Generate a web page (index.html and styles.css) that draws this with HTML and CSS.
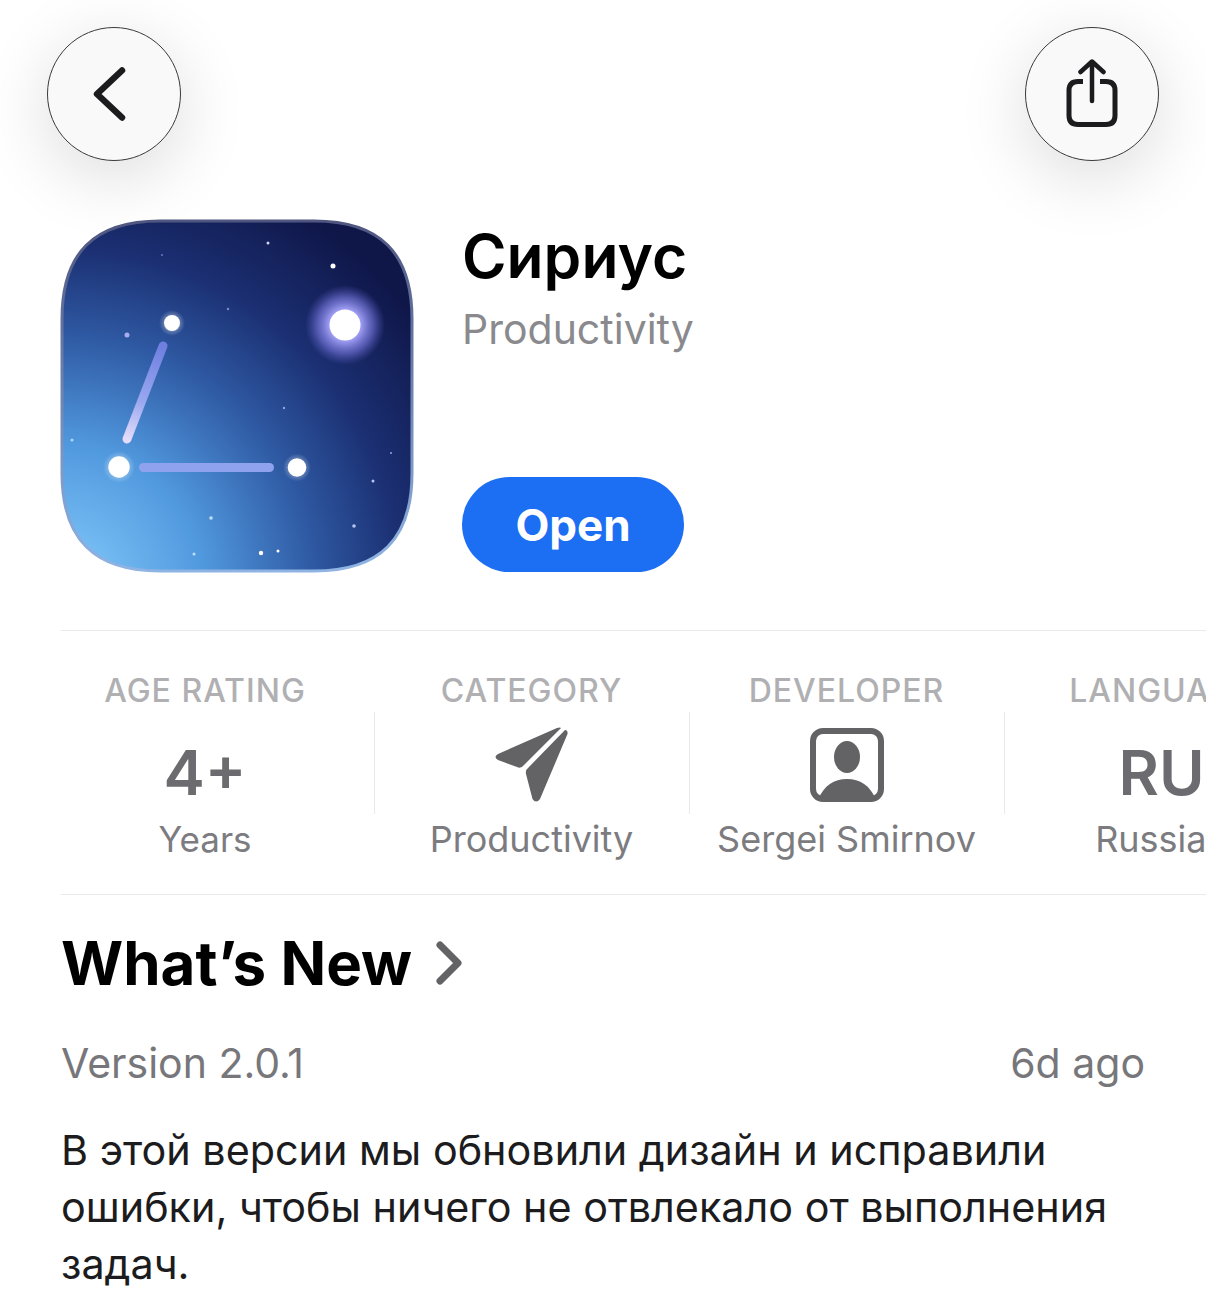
FILE: index.html
```html
<!DOCTYPE html>
<html lang="en">
<head>
<meta charset="UTF-8">
<meta name="viewport" content="width=device-width, initial-scale=1.0">
<title>Сириус</title>
<link rel="stylesheet" href="styles.css">
</head>
<body>

<div class="top-bar">
  <div class="round-btn">
    <svg width="36" height="56" viewBox="0 0 36 56"><path d="M30 4.5 L5 28 L30 51.5" fill="none" stroke="#1c1c1e" stroke-width="6.5" stroke-linecap="round" stroke-linejoin="round"/></svg>
  </div>
  <div class="round-btn">
    <svg width="56" height="70" viewBox="0 0 56 70"><path d="M19 22.5 H14 Q5 22.5 5 31.5 V56.5 Q5 65.5 14 65.5 H42 Q51 65.5 51 56.5 V31.5 Q51 22.5 42 22.5 H36" fill="none" stroke="#1c1c1e" stroke-width="5"/><path d="M28 42 V3 M16.5 13 L28 2.5 L39.5 13" fill="none" stroke="#1c1c1e" stroke-width="4.5" stroke-linecap="round" stroke-linejoin="round"/></svg>
  </div>
</div>

<div class="app-head">
  <svg class="app-icon" width="354" height="354" viewBox="0 0 354 354">
    <defs>
      <radialGradient id="sky" gradientUnits="userSpaceOnUse" cx="0" cy="370" r="450">
        <stop offset="0" stop-color="#86cdfd"/>
        <stop offset="0.32" stop-color="#5199de"/>
        <stop offset="0.56" stop-color="#2f5aa4"/>
        <stop offset="0.76" stop-color="#1b2f72"/>
        <stop offset="1" stop-color="#0f1648"/>
      </radialGradient>
      <radialGradient id="halo">
        <stop offset="0.4" stop-color="#9d9cf2"/>
        <stop offset="0.7" stop-color="#7474d8" stop-opacity="0.65"/>
        <stop offset="1" stop-color="#5a5ac0" stop-opacity="0"/>
      </radialGradient>
      <radialGradient id="glow">
        <stop offset="0.5" stop-color="#ffffff" stop-opacity="0.35"/>
        <stop offset="1" stop-color="#ffffff" stop-opacity="0"/>
      </radialGradient>
      <linearGradient id="arm" gradientUnits="userSpaceOnUse" x1="103" y1="127" x2="67" y2="220">
        <stop offset="0" stop-color="#6f7fe0"/>
        <stop offset="0.6" stop-color="#9aa8f0"/>
        <stop offset="1" stop-color="#e4dcfa"/>
      </linearGradient>
      <linearGradient id="rim" x1="0" y1="0" x2="0" y2="1">
        <stop offset="0" stop-color="#4f5680"/>
        <stop offset="1" stop-color="#8fb4e4"/>
      </linearGradient>
    </defs>
    <path d="M100 2 H254 C320 2 352 34 352 100 V254 C352 320 320 352 254 352 H100 C34 352 2 320 2 254 V100 C2 34 34 2 100 2 Z" fill="url(#sky)" stroke="url(#rim)" stroke-width="3"/>
    <circle cx="285" cy="106" r="40" fill="url(#halo)"/>
    <circle cx="285" cy="106" r="15.5" fill="#fff"/>
    <path d="M103 127 L67 220" stroke="url(#arm)" stroke-width="9" stroke-linecap="round" fill="none"/>
    <rect x="79" y="244" width="135" height="9" rx="4.5" fill="#8ea2ee"/>
    <circle cx="112" cy="104" r="13" fill="url(#glow)"/>
    <circle cx="59" cy="248" r="16" fill="url(#glow)"/>
    <circle cx="237" cy="248.5" r="14" fill="url(#glow)"/>
    <circle cx="112" cy="104" r="8" fill="#fff"/>
    <circle cx="59" cy="248" r="10.7" fill="#fff"/>
    <circle cx="237" cy="248.5" r="9.3" fill="#fff"/>
    <g fill="#fff">
      <circle cx="273" cy="47" r="2.5"/>
      <circle cx="208" cy="24" r="1.5" fill="#cfd4f4"/>
      <circle cx="67" cy="116" r="2.5" fill="#a6aef0"/>
      <circle cx="12" cy="221" r="1.5" fill="#a8dcf8"/>
      <circle cx="151" cy="299" r="1.8" fill="#bfe0fa"/>
      <circle cx="201" cy="334" r="2.2"/>
      <circle cx="218" cy="332" r="1.5"/>
      <circle cx="134" cy="335" r="1.5" fill="#bfe0fa"/>
      <circle cx="294" cy="307" r="1.8" fill="#b6c6f2"/>
      <circle cx="313" cy="262" r="1.5" fill="#b6c6f2"/>
      <circle cx="224" cy="189" r="1.2" fill="#8fa5e6"/>
      <circle cx="168" cy="90" r="1.2" fill="#7a8ad6"/>
      <circle cx="102" cy="36" r="1" fill="#6a78c8"/>
      <circle cx="331" cy="234" r="1" fill="#8fa5e6"/>
    </g>
  </svg>
  <div class="app-info">
    <h1 class="app-name">Сириус</h1>
    <div class="app-cat">Productivity</div>
    <div class="open-btn">Open</div>
  </div>
</div>

<div class="stats">
  <div class="stat stat-age">
    <div class="stat-label">AGE RATING</div>
    <div class="stat-value"><span class="stat-big">4+</span></div>
    <div class="stat-sub">Years</div>
  </div>
  <div class="stat stat-cat">
    <div class="stat-label">CATEGORY</div>
    <div class="stat-value">
      <svg width="76" height="76" viewBox="0 0 76 76"><path d="M71 3 Q74 3 73.5 7 L46 72 Q42 77 38.500 72 L32 47 Q31 43 35 40 Z" fill="#636366"/><path d="M67 1 L30 38 Q27 42 23 40 L4 33 Q-1 30 4 27 L63 1 Q66 0 67 1 Z" fill="#636366"/></svg>
    </div>
    <div class="stat-sub">Productivity</div>
  </div>
  <div class="stat stat-dev">
    <div class="stat-label">DEVELOPER</div>
    <div class="stat-value">
      <svg width="74" height="74" viewBox="0 0 74 74"><rect x="3" y="3" width="68" height="68" rx="10" fill="#fff" stroke="#636366" stroke-width="6"/><ellipse cx="37" cy="29" rx="13" ry="16" fill="#636366"/><path d="M8 72 C14 57 24 51 37 51 C50 51 60 57 66 72 Z" fill="#636366"/></svg>
    </div>
    <div class="stat-sub">Sergei Smirnov</div>
  </div>
  <div class="stat stat-lang">
    <div class="stat-label">LANGUAGE</div>
    <div class="stat-value"><span class="stat-big">RU</span></div>
    <div class="stat-sub">Russian</div>
  </div>
</div>

<div class="whats-new">
  <div class="wn-title">
    <h2>What’s New</h2>
    <svg width="28" height="44" viewBox="0 0 28 44"><path d="M6 4 L24 22 L6 40" fill="none" stroke="#636366" stroke-width="7" stroke-linecap="round" stroke-linejoin="round"/></svg>
  </div>
  <div class="wn-meta">
    <span>Version 2.0.1</span>
    <span>6d ago</span>
  </div>
  <p class="wn-text">В этой версии мы обновили дизайн и исправили ошибки, чтобы ничего не отвлекало от выполнения задач.</p>
</div>

</body>
</html>
```
FILE: styles.css
```css
html, body {
  margin: 0;
  height: 1309px;
  overflow: hidden;
  background: #fff;
  font-family: 'Inter', 'Roboto', sans-serif;
}

.top-bar {
  display: flex;
  justify-content: space-between;
  padding: 27px 47px 0 47px;
  height: 219px;
  box-sizing: border-box;
}

.round-btn {
  width: 134px;
  height: 134px;
  box-sizing: border-box;
  border: 1.5px solid #3a3a3c;
  border-radius: 50%;
  background: #f9f9f9;
  box-shadow: 0 16px 70px rgba(0, 0, 0, 0.14);
  display: flex;
  justify-content: center;
  align-items: center;
}

.round-btn:first-child svg {
  margin-right: 8px;
}

.app-head {
  display: flex;
  padding-left: 60px;
  height: 411px;
  box-sizing: border-box;
}

.app-icon {
  flex-shrink: 0;
}

.app-info {
  margin-left: 48px;
}

.app-name {
  margin: -1px 0 0;
  font-size: 60.5px;
  line-height: 76px;
  font-weight: 600;
  color: #000;
}

.app-cat {
  margin-top: 10px;
  font-size: 41px;
  line-height: 50px;
  color: #8a8a8e;
}

.open-btn {
  width: 222px;
  height: 95px;
  margin-top: 123px;
  border-radius: 48px;
  background: #1c6ef2;
  color: #fff;
  font-size: 44px;
  font-weight: 700;
  display: flex;
  justify-content: center;
  align-items: center;
}

.stats {
  display: flex;
  margin-left: 61px;
  height: 265px;
  border-top: 1px solid #e9e9eb;
  border-bottom: 1px solid #e9e9eb;
  box-sizing: border-box;
  overflow: hidden;
}

.stat {
  flex-shrink: 0;
  width: 315px;
  box-sizing: border-box;
  text-align: center;
  white-space: nowrap;
  position: relative;
  padding-top: 41px;
}

.stat-age {
  width: 313px;
  padding-right: 25px;
}

/* short divider between the columns */
.stat + .stat::before {
  content: "";
  position: absolute;
  left: 0;
  top: 81px;
  height: 102px;
  width: 1px;
  background: #e9e9eb;
}

.stat-label {
  font-size: 32px;
  line-height: 38px;
  font-weight: 500;
  letter-spacing: 1px;
  color: #b0b0b3;
}

.stat-value {
  height: 107px;
  box-sizing: border-box;
  padding-top: 3px;
  display: flex;
  justify-content: center;
  align-items: center;
}

.stat-big {
  font-size: 62px;
  line-height: 76px;
  font-weight: 600;
  color: #6c6c70;
  padding-top: 16px;
}

.stat-sub {
  font-size: 36px;
  line-height: 44px;
  color: #7c7c80;
}

.stat-age .stat-sub {
  font-size: 35px;
}

.whats-new {
  padding: 0 61px;
}

.wn-title {
  display: flex;
  align-items: center;
  gap: 22px;
  margin-top: 31px;
}

.wn-title h2 {
  margin: 0;
  font-size: 60px;
  line-height: 74px;
  font-weight: 700;
  color: #000;
}

.wn-meta {
  display: flex;
  justify-content: space-between;
  margin-top: 38px;
  font-size: 41px;
  line-height: 50px;
  color: #77777b;
}

.wn-text {
  margin: 34px 0 0;
  font-size: 41.3px;
  line-height: 57px;
  color: #1c1c1e;
}
```
